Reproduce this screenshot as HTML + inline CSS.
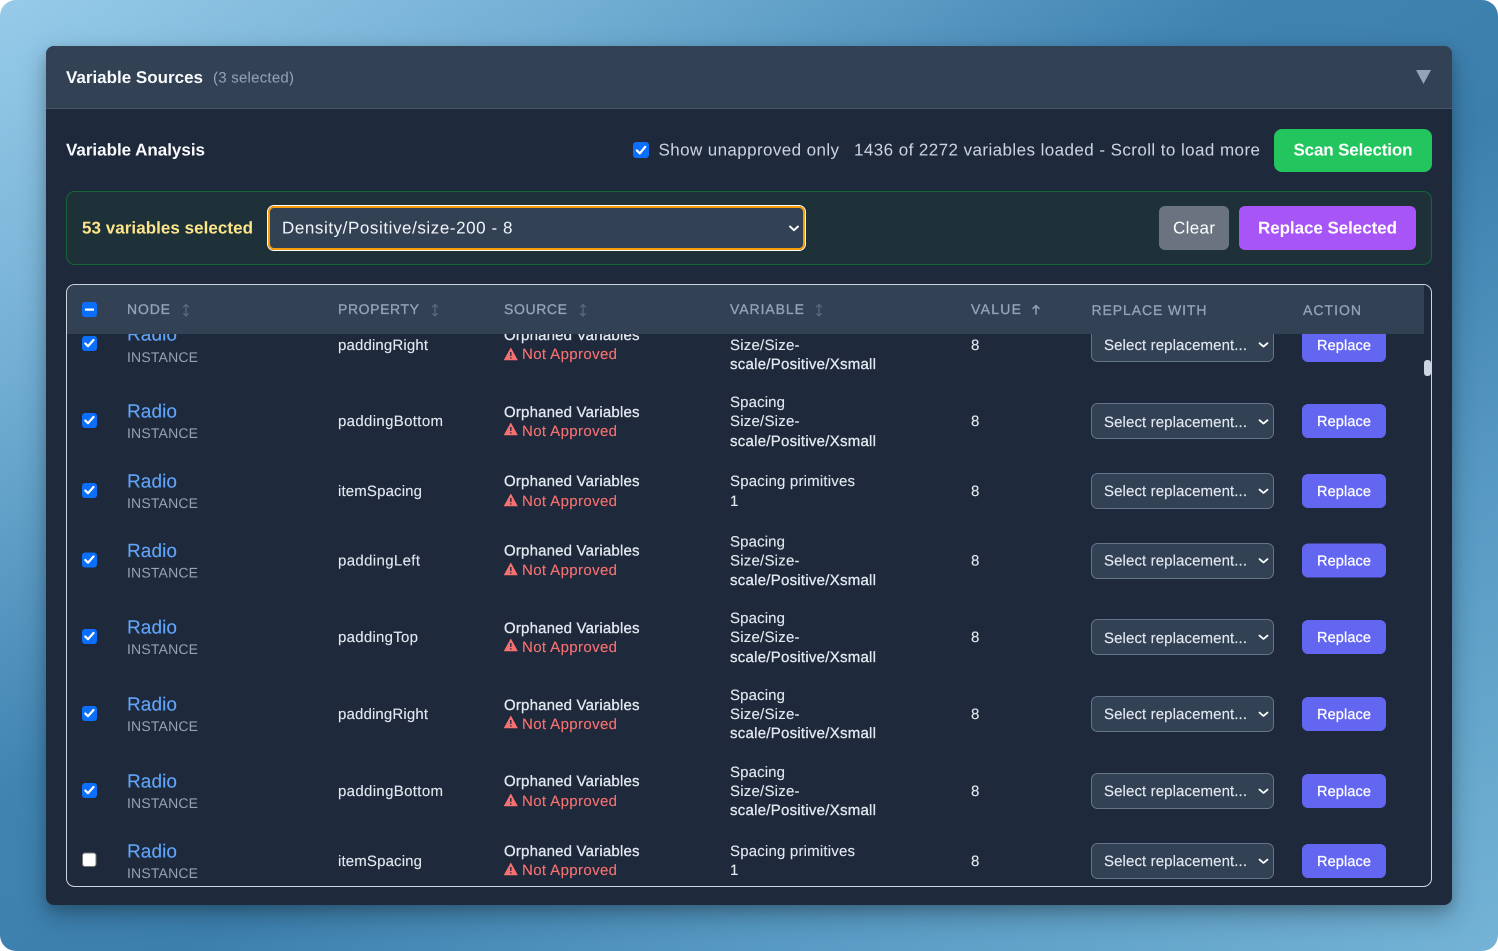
<!DOCTYPE html>
<html lang="en">
<head>
<meta charset="utf-8">
<title>Variable Sources</title>
<style>
html,body{margin:0;padding:0;width:1498px;height:951px;background:#fff;overflow:hidden}
.bg{position:absolute;left:0;top:0;width:1498px;height:951px;border-radius:16px;background:linear-gradient(to bottom right,#97cbe9 0%,#72aed3 20%,#3f83b1 42%,#3c7fad 56%,#5598c2 74%,#74b3d5 100%)}
.card{position:absolute;left:46px;top:46px;width:1406px;height:859px;border-radius:8px;background:#1e293b;box-shadow:0 10px 25px rgba(0,0,0,.28),0 4px 10px rgba(0,0,0,.12)}
svg{position:absolute;left:0;top:0}
text{font-family:"Liberation Sans",sans-serif;font-size:15px;fill:#e2e8f0;stroke:#e2e8f0;stroke-width:.12;text-rendering:geometricPrecision}
.t16{font-size:17px;stroke:none}
.b{font-weight:700;fill:#f8fafc}
.th{font-size:14px;fill:#94a3b8;stroke:#94a3b8;stroke-width:.3}
.m{stroke:#e2e8f0;stroke-width:.3}
.rd{font-size:19px;fill:#60a5fa;stroke:#60a5fa}
.in{font-size:14px;fill:#94a3b8;stroke:none}
.na{fill:#f87171;stroke:#f87171}
.bt{font-size:14.5px;fill:#fff;stroke:#fff;stroke-width:.25}
.sel{fill:#e2e8f0;stroke:#e2e8f0;stroke-width:.15}
.ck{fill:none;stroke:#fff;stroke-width:2.2;stroke-linecap:round;stroke-linejoin:round}
.sr{fill:none;stroke:#5b6b82;stroke-width:1.2;stroke-linecap:round;stroke-linejoin:round}
</style>
</head>
<body>
<div class="bg"></div>
<div class="card"></div>
<svg width="1498" height="951" viewBox="0 0 1498 951" xmlns="http://www.w3.org/2000/svg">
<defs>
<clipPath id="c"><rect x="67" y="334" width="1357" height="552"/></clipPath>
<g id="warn"><path d="M510.8 3 L517.4 15 H504.2 Z" fill="#f87171" stroke="#f87171" stroke-width=".6" stroke-linejoin="round"/><path d="M510.8 7V11M510.8 12.3V13.6" stroke="#1e293b" stroke-width="1.4"/></g>
</defs>

<!-- header -->
<path d="M46 108V54a8 8 0 0 1 8-8H1444a8 8 0 0 1 8 8V108Z" fill="#334155"/>
<rect x="46" y="108" width="1406" height="1" fill="#475569"/>
<text class="t16 b" x="66" y="83" textLength="137">Variable Sources</text>
<text x="213" y="82.5" style="fill:#94a3b8;stroke:none" textLength="81">(3 selected)</text>
<path d="M1416 70H1431L1423.5 84Z" fill="#94a3b8"/>

<!-- toolbar -->
<text class="t16 b" x="66" y="155.5" textLength="139">Variable Analysis</text>
<rect x="633" y="142" width="16" height="16" rx="3" fill="#0b6ffb"/>
<path class="ck" d="M636.8 150.4L639.8 153.4L645.2 146.8"/>
<text class="t16" x="658.5" y="155.5" style="fill:#cbd5e1" textLength="180.5">Show unapproved only</text>
<text class="t16" x="854" y="155.5" style="fill:#cbd5e1" textLength="406">1436 of 2272 variables loaded - Scroll to load more</text>
<rect x="1274" y="129" width="158" height="43" rx="8" fill="#22c55e"/>
<text class="t16 b" x="1293.5" y="155.5" style="fill:#fff" textLength="119">Scan Selection</text>

<!-- selection band -->
<rect x="66.5" y="191.5" width="1365" height="73" rx="8" fill="#1f3138" stroke="#166534"/>
<text class="t16 b" x="82" y="233.5" style="fill:#fde68a" textLength="171">53 variables selected</text>
<rect x="267.5" y="205.5" width="538" height="45" rx="6.5" fill="#334155" stroke="#f8fafc"/>
<rect x="269" y="207" width="535" height="42" rx="5" fill="#334155" stroke="#f59e0b" stroke-width="2"/>
<text class="t16" x="282" y="233.5" style="fill:#f1f5f9" textLength="230.5">Density/Positive/size-200 - 8</text>
<path class="ck" style="stroke-width:1.9" d="M790 226.5L794 230.2L798 226.5"/>
<rect x="1159" y="206" width="70" height="44" rx="6" fill="#6b7280"/>
<text class="t16" x="1173" y="233.5" style="fill:#fff" textLength="42">Clear</text>
<rect x="1239" y="206" width="177" height="44" rx="6" fill="#a855f7"/>
<text class="t16 b" x="1258" y="233.5" style="fill:#fff" textLength="139">Replace Selected</text>

<!-- table rows -->
<g clip-path="url(#c)">
<g transform="translate(0,345)">
<rect x="82" y="-9" width="15" height="15" rx="3" fill="#0b6ffb"/><path class="ck" d="M85.3 -1.5L88 1.2L93.5 -5"/>
<text class="rd" x="127" y="-4.5" textLength="50">Radio</text><text class="in" x="127" y="17" textLength="71">INSTANCE</text>
<text x="338" y="5" textLength="90">paddingRight</text>
<text class="m" x="504" y="-5" textLength="135.5">Orphaned Variables</text>
<use href="#warn"/><text class="na" x="522" y="14" textLength="95">Not Approved</text>
<text x="730" y="5" textLength="69.5">Size/Size-</text><text class="m" x="730" y="24" textLength="146">scale/Positive/Xsmall</text>
<text x="971" y="5" textLength="8.5">8</text>
<rect x="1091.5" y="-18.5" width="182" height="35" rx="6" fill="#334155" stroke="#64748b"/>
<text class="sel" x="1104" y="5" textLength="143">Select replacement...</text><path class="ck" style="stroke-width:1.8" d="M1259.5 -1.8L1263.5 1.6L1267.5 -1.8"/>
<rect x="1302" y="-17" width="84" height="34" rx="6" fill="#6366f1"/><text class="bt" x="1317" y="5" textLength="54">Replace</text>
</g>
<g transform="translate(0,421)">
<rect x="82" y="-8" width="15" height="15" rx="3" fill="#0b6ffb"/><path class="ck" d="M85.3 -0.5L88 2.2L93.5 -4"/>
<text class="rd" x="127" y="-3.5" textLength="50">Radio</text><text class="in" x="127" y="17" textLength="71">INSTANCE</text>
<text x="338" y="5" textLength="105">paddingBottom</text>
<text class="m" x="504" y="-4" textLength="135.5">Orphaned Variables</text>
<use href="#warn" y="-1"/><text class="na" x="522" y="15" textLength="95">Not Approved</text>
<text x="730" y="-14" textLength="55">Spacing</text><text x="730" y="5" textLength="69.5">Size/Size-</text><text class="m" x="730" y="25" textLength="146">scale/Positive/Xsmall</text>
<text x="971" y="5" textLength="8.5">8</text>
<rect x="1091.5" y="-17.5" width="182" height="35" rx="6" fill="#334155" stroke="#64748b"/>
<text class="sel" x="1104" y="6" textLength="143">Select replacement...</text><path class="ck" style="stroke-width:1.8" d="M1259.5 -0.8L1263.5 2.6L1267.5 -0.8"/>
<rect x="1302" y="-17" width="84" height="34" rx="6" fill="#6366f1"/><text class="bt" x="1317" y="5" textLength="54">Replace</text>
</g>
<g transform="translate(0,491)">
<rect x="82" y="-8" width="15" height="15" rx="3" fill="#0b6ffb"/><path class="ck" d="M85.3 -0.5L88 2.2L93.5 -4"/>
<text class="rd" x="127" y="-3.5" textLength="50">Radio</text><text class="in" x="127" y="17" textLength="71">INSTANCE</text>
<text x="338" y="5" textLength="84">itemSpacing</text>
<text class="m" x="504" y="-5" textLength="135.5">Orphaned Variables</text>
<use href="#warn"/><text class="na" x="522" y="15" textLength="95">Not Approved</text>
<text x="730" y="-5" textLength="125">Spacing primitives</text><text x="730" y="15">1</text>
<text x="971" y="5" textLength="8.5">8</text>
<rect x="1091.5" y="-17.5" width="182" height="35" rx="6" fill="#334155" stroke="#64748b"/>
<text class="sel" x="1104" y="5" textLength="143">Select replacement...</text><path class="ck" style="stroke-width:1.8" d="M1259.5 -1.4L1263.5 2L1267.5 -1.4"/>
<rect x="1302" y="-17" width="84" height="34" rx="6" fill="#6366f1"/><text class="bt" x="1317" y="5" textLength="54">Replace</text>
</g>
<g transform="translate(0,560.5)">
<rect x="82" y="-8" width="15" height="15" rx="3" fill="#0b6ffb"/><path class="ck" d="M85.3 -0.5L88 2.2L93.5 -4"/>
<text class="rd" x="127" y="-3.5" textLength="50">Radio</text><text class="in" x="127" y="17" textLength="71">INSTANCE</text>
<text x="338" y="5" textLength="82">paddingLeft</text>
<text class="m" x="504" y="-5" textLength="135.5">Orphaned Variables</text>
<use href="#warn" y="-.5"/><text class="na" x="522" y="14.5" textLength="95">Not Approved</text>
<text x="730" y="-14" textLength="55">Spacing</text><text x="730" y="5" textLength="69.5">Size/Size-</text><text class="m" x="730" y="24.5" textLength="146">scale/Positive/Xsmall</text>
<text x="971" y="5" textLength="8.5">8</text>
<rect x="1091.5" y="-17" width="182" height="35" rx="6" fill="#334155" stroke="#64748b"/>
<text class="sel" x="1104" y="5" textLength="143">Select replacement...</text><path class="ck" style="stroke-width:1.8" d="M1259.5 -1.4L1263.5 2L1267.5 -1.4"/>
<rect x="1302" y="-17" width="84" height="34" rx="6" fill="#6366f1"/><text class="bt" x="1317" y="5" textLength="54">Replace</text>
</g>
<g transform="translate(0,637)">
<rect x="82" y="-8" width="15" height="15" rx="3" fill="#0b6ffb"/><path class="ck" d="M85.3 -0.5L88 2.2L93.5 -4"/>
<text class="rd" x="127" y="-3.5" textLength="50">Radio</text><text class="in" x="127" y="17" textLength="71">INSTANCE</text>
<text x="338" y="5" textLength="80">paddingTop</text>
<text class="m" x="504" y="-4" textLength="135.5">Orphaned Variables</text>
<use href="#warn" y="-1"/><text class="na" x="522" y="15" textLength="95">Not Approved</text>
<text x="730" y="-14" textLength="55">Spacing</text><text x="730" y="5" textLength="69.5">Size/Size-</text><text class="m" x="730" y="25" textLength="146">scale/Positive/Xsmall</text>
<text x="971" y="5" textLength="8.5">8</text>
<rect x="1091.5" y="-17.5" width="182" height="35" rx="6" fill="#334155" stroke="#64748b"/>
<text class="sel" x="1104" y="6" textLength="143">Select replacement...</text><path class="ck" style="stroke-width:1.8" d="M1259.5 -1.4L1263.5 2L1267.5 -1.4"/>
<rect x="1302" y="-17" width="84" height="34" rx="6" fill="#6366f1"/><text class="bt" x="1317" y="5" textLength="54">Replace</text>
</g>
<g transform="translate(0,714)">
<rect x="82" y="-8" width="15" height="15" rx="3" fill="#0b6ffb"/><path class="ck" d="M85.3 -0.5L88 2.2L93.5 -4"/>
<text class="rd" x="127" y="-3.5" textLength="50">Radio</text><text class="in" x="127" y="17" textLength="71">INSTANCE</text>
<text x="338" y="5" textLength="90">paddingRight</text>
<text class="m" x="504" y="-4" textLength="135.5">Orphaned Variables</text>
<use href="#warn" y="-1"/><text class="na" x="522" y="15" textLength="95">Not Approved</text>
<text x="730" y="-14" textLength="55">Spacing</text><text x="730" y="5" textLength="69.5">Size/Size-</text><text class="m" x="730" y="24" textLength="146">scale/Positive/Xsmall</text>
<text x="971" y="5" textLength="8.5">8</text>
<rect x="1091.5" y="-17.5" width="182" height="35" rx="6" fill="#334155" stroke="#64748b"/>
<text class="sel" x="1104" y="5" textLength="143">Select replacement...</text><path class="ck" style="stroke-width:1.8" d="M1259.5 -1.4L1263.5 2L1267.5 -1.4"/>
<rect x="1302" y="-17" width="84" height="34" rx="6" fill="#6366f1"/><text class="bt" x="1317" y="5" textLength="54">Replace</text>
</g>
<g transform="translate(0,791)">
<rect x="82" y="-8" width="15" height="15" rx="3" fill="#0b6ffb"/><path class="ck" d="M85.3 -0.5L88 2.2L93.5 -4"/>
<text class="rd" x="127" y="-3.5" textLength="50">Radio</text><text class="in" x="127" y="17" textLength="71">INSTANCE</text>
<text x="338" y="5" textLength="105">paddingBottom</text>
<text class="m" x="504" y="-5" textLength="135.5">Orphaned Variables</text>
<use href="#warn"/><text class="na" x="522" y="15" textLength="95">Not Approved</text>
<text x="730" y="-14" textLength="55">Spacing</text><text x="730" y="5" textLength="69.5">Size/Size-</text><text class="m" x="730" y="24" textLength="146">scale/Positive/Xsmall</text>
<text x="971" y="5" textLength="8.5">8</text>
<rect x="1091.5" y="-17.5" width="182" height="35" rx="6" fill="#334155" stroke="#64748b"/>
<text class="sel" x="1104" y="5" textLength="143">Select replacement...</text><path class="ck" style="stroke-width:1.8" d="M1259.5 -1.4L1263.5 2L1267.5 -1.4"/>
<rect x="1302" y="-17" width="84" height="34" rx="6" fill="#6366f1"/><text class="bt" x="1317" y="5" textLength="54">Replace</text>
</g>
<g transform="translate(0,861)">
<rect x="82.5" y="-8" width="13.5" height="13.5" rx="2.5" fill="#fff" stroke="#767676"/>
<text class="rd" x="127" y="-3.5" textLength="50">Radio</text><text class="in" x="127" y="17" textLength="71">INSTANCE</text>
<text x="338" y="5" textLength="84">itemSpacing</text>
<text class="m" x="504" y="-5" textLength="135.5">Orphaned Variables</text>
<use href="#warn" y="-1"/><text class="na" x="522" y="14" textLength="95">Not Approved</text>
<text x="730" y="-5" textLength="125">Spacing primitives</text><text x="730" y="14">1</text>
<text x="971" y="5" textLength="8.5">8</text>
<rect x="1091.5" y="-17.5" width="182" height="35" rx="6" fill="#334155" stroke="#64748b"/>
<text class="sel" x="1104" y="5" textLength="143">Select replacement...</text><path class="ck" style="stroke-width:1.8" d="M1259.5 -1.4L1263.5 2L1267.5 -1.4"/>
<rect x="1302" y="-17" width="84" height="34" rx="6" fill="#6366f1"/><text class="bt" x="1317" y="5" textLength="54">Replace</text>
</g>
</g>

<!-- table header -->
<path d="M67 334V293a8 8 0 0 1 8-8H1424V334Z" fill="#334155"/>
<rect x="82" y="302" width="15" height="15" rx="3" fill="#0b6ffb"/>
<rect x="85" y="308.5" width="9" height="2.2" fill="#fff"/>
<text class="th" x="127" y="314" textLength="43">NODE</text>
<path class="sr" d="M183.5 307L186 304.5L188.5 307M186 304.5V316M183.5 313.5L186 316L188.5 313.5"/>
<text class="th" x="338" y="314" textLength="81">PROPERTY</text>
<path class="sr" d="M432.5 307L435 304.5L437.5 307M435 304.5V316M432.5 313.5L435 316L437.5 313.5"/>
<text class="th" x="504" y="314" textLength="63">SOURCE</text>
<path class="sr" d="M580.5 307L583 304.5L585.5 307M583 304.5V316M580.5 313.5L583 316L585.5 313.5"/>
<text class="th" x="730" y="314" textLength="74">VARIABLE</text>
<path class="sr" d="M816.5 307L819 304.5L821.5 307M819 304.5V316M816.5 313.5L819 316L821.5 313.5"/>
<text class="th" x="971" y="314" textLength="50">VALUE</text>
<path class="sr" style="stroke:#94a3b8;stroke-width:1.5" d="M1033 308.5L1036 305.5L1039 308.5M1036 305.5V314"/>
<text class="th" x="1091.5" y="315" textLength="115">REPLACE WITH</text>
<text class="th" x="1303" y="315" textLength="58">ACTION</text>

<!-- table border + scrollbar -->
<rect x="66.5" y="284.5" width="1365" height="602" rx="8" fill="none" stroke="#cbd5e1"/>
<rect x="1424" y="360" width="7" height="16" rx="3" fill="#cbd5e1"/>
</svg>
</body>
</html>
